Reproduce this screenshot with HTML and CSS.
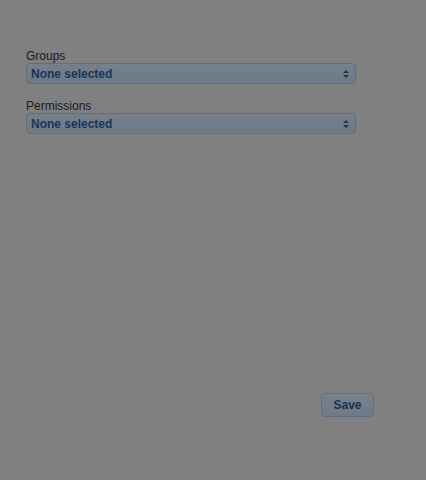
FILE: index.html
```html
<!DOCTYPE html>
<html>
<head>
<meta charset="utf-8">
<link rel="stylesheet" href="styles.css">
</head>
<body>
<div class="page">
  <form class="form">
    <div class="field">
      <label class="label">Groups</label>
      <div class="select">
        <span class="value">None selected</span>
        <svg class="arrows" width="6" height="8" viewBox="0 0 6 8"><path d="M3 0 L6 3 L0 3 Z M0 5 L6 5 L3 8 Z" fill="#1f3550"/></svg>
      </div>
    </div>
    <div class="field">
      <label class="label">Permissions</label>
      <div class="select">
        <span class="value">None selected</span>
        <svg class="arrows" width="6" height="8" viewBox="0 0 6 8"><path d="M3 0 L6 3 L0 3 Z M0 5 L6 5 L3 8 Z" fill="#1f3550"/></svg>
      </div>
    </div>
    <div class="actions">
      <button type="button" class="save">Save</button>
    </div>
  </form>
</div>
</body>
</html>
```
FILE: styles.css
```css
html, body {
  margin: 0;
  padding: 0;
  background: #808080;
  font-family: "Liberation Sans", Arial, sans-serif;
}
.page {
  width: 426px;
  height: 480px;
  box-sizing: border-box;
  padding: 49px 0 0 26px;
}
.form {
  width: 330px;
  display: flex;
  flex-direction: column;
}
.field {
  display: flex;
  flex-direction: column;
  margin-bottom: 15px;
}
.label {
  font-size: 12px;
  line-height: 14px;
  color: #1a1a1a;
}
.select {
  height: 21px;
  box-sizing: border-box;
  border: 1px solid #5f6e7f;
  border-radius: 4px;
  background: linear-gradient(#75808c, #6d7986);
  display: flex;
  align-items: center;
  justify-content: space-between;
  padding: 0 6px 0 4px;
}
.value {
  font-size: 12px;
  font-weight: bold;
  color: #183557;
}
.arrows {
  display: block;
}
.actions {
  display: flex;
  justify-content: flex-end;
  margin-top: 244px;
  margin-right: -18px;
}
.save {
  width: 53px;
  height: 24px;
  border: 1px solid #5f6e7f;
  border-radius: 4px;
  background: linear-gradient(#77828e, #6f7a86);
  font-family: "Liberation Sans", Arial, sans-serif;
  font-size: 12px;
  font-weight: bold;
  color: #17324e;
  padding: 0;
}
```
